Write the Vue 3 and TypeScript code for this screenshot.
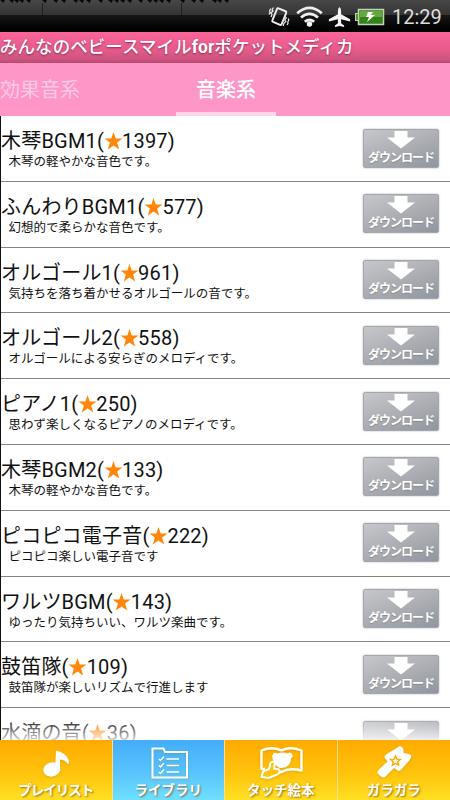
<script setup lang="ts">
interface Track {
  title: string
  stars: number
  note: string
}

const tracks: Track[] = [
  { title: '木琴BGM1', stars: 1397, note: '木琴の軽やかな音色です。' },
  { title: 'ふんわりBGM1', stars: 577, note: '幻想的で柔らかな音色です。' },
  { title: 'オルゴール1', stars: 961, note: '気持ちを落ち着かせるオルゴールの音です。' },
  { title: 'オルゴール2', stars: 558, note: 'オルゴールによる安らぎのメロディです。' },
  { title: 'ピアノ1', stars: 250, note: '思わず楽しくなるピアノのメロディです。' },
  { title: '木琴BGM2', stars: 133, note: '木琴の軽やかな音色です。' },
  { title: 'ピコピコ電子音', stars: 222, note: 'ピコピコ楽しい電子音です' },
  { title: 'ワルツBGM', stars: 143, note: 'ゆったり気持ちいい、ワルツ楽曲です。' },
  { title: '鼓笛隊', stars: 109, note: '鼓笛隊が楽しいリズムで行進します' },
  { title: '水滴の音', stars: 36, note: '' },
]

const notches: number[] = [0, 9, 14, 19, 26, 42, 53, 61, 73, 79, 86, 98, 108, 114, 120, 127, 138, 147, 153, 159, 166, 180, 191, 199, 212, 217, 224]
</script>

<template>
  <div class="screen">
    <header class="status">
      <svg class="notches" width="240" height="32" viewBox="0 0 240 32">
        <path v-for="x in notches" :key="x" :d="`M${x} 0h5l-1.5 3z`" fill="#080808" />
        <path d="M42.500 3v20M181.500 3v20" stroke="#111" stroke-opacity=".6" />
      </svg>
      <svg class="status-icons" width="118" height="26" viewBox="268 3 118 26">
        <g fill="none" stroke="#eee">
          <rect x="274.300" y="9.300" width="10" height="14.600" rx="1.200" stroke-width="1.900" transform="rotate(22 279.300 16.600)" />
          <path d="M273.500 7.500l-1.500 2.500 1 1-2 2 1 1.500-1 2.500M270.800 8.500l-1.300 2.500.6 1-1 2.500M285.300 16.500l1 1.500-1.500 2 1 1.500-2 2-.5 2.500M288.300 18.500l.5 1.500-1 2 .2 1.500-1 1.500" stroke-width="1.200" />
          <path d="M297.200 13.200Q309.500 2.500 321.800 13.200M301 17.600Q309.500 10.300 318 17.600M304.800 21.800Q309.500 17.800 314.200 21.800" stroke-width="2.700" />
        </g>
        <circle cx="309.500" cy="24" r="2.700" fill="#f3f3f3" />
        <path d="M339.500 7q-1.500 1-1.600 4v3.200l-9 5.100v2.200l9-2.200v4l-3 2.100v1.600l4.600-1 4.600 1v-1.600l-3-2.100v-4l9 2.200v-2.200l-9-5.100v-3.200q-.1-3-1.600-4z" fill="#f4f4f4" />
        <rect x="358.500" y="9.500" width="25" height="15" fill="#338316" stroke="#c8cfc0" stroke-width="1.500" />
        <rect x="360" y="11" width="22" height="6" fill="#62a940" />
        <rect x="355.500" y="13.500" width="3" height="7" fill="#489421" stroke="#c8cfc0" />
        <path d="M368 12h5l-2 3h4l-8 7 2-5h-3z" fill="#fff" />
      </svg>
      <span class="clock">12:29</span>
    </header>

    <h1 class="title">みんなのベビースマイル<b>for</b>ポケットメディカ</h1>

    <nav class="tabs">
      <span class="tab dim">効果音系</span>
      <span class="tab active">音楽系</span>
    </nav>

    <main class="list">
      <article v-for="track in tracks" :key="track.title" class="row">
        <div class="info">
          <h2 class="name">{{ track.title }}(<svg class="star" width="19" height="18" viewBox="0 0 19 18"><path d="M9.500 0l2.200 6.400h6.800l-5.400 4.200 2.100 6.900-5.700-4.100-5.700 4.100 2.100-6.900L.5 6.400h6.800z" fill="#ff860b" /></svg>{{ track.stars }})</h2>
          <p class="note">{{ track.note }}</p>
        </div>
        <button class="download">
          <svg class="arrow" width="30" height="18" viewBox="0 0 30 18"><path d="M8.500 0h13v6.500h7.500L15 17.500 1 6.500h7.500z" fill="#fff" /></svg>
          <span class="download-label">ダウンロード</span>
        </button>
      </article>
      <div class="fade"></div>
    </main>

    <footer class="bottom">
      <div class="item">
        <svg class="icon" width="52" height="36" viewBox="0 0 52 36">
          <ellipse cx="21.800" cy="27.500" rx="8.600" ry="7" transform="rotate(-15 21.800 27.500)" fill="#fff" />
          <path d="M25 28l1-19.500q7.500 1.500 11 6.500 3.500 5 1 7.500-2.500-4.500-8-5l.2 11z" fill="#fff" />
        </svg>
        <span class="label narrow">プレイリスト</span>
      </div>
      <div class="item on">
        <svg class="icon" width="52" height="36" viewBox="0 0 52 36" fill="none" stroke="#fff">
          <path d="M10.500 6.500h11l1.500 3.500h22v25.500H10.500z" stroke-width="2" />
          <path d="M24.500 17H37M24.500 23.500H37M24.500 30H37" stroke-width="1.500" />
          <path d="M17 17l1.500 1.500 3.500-4M17 23.500l1.500 1.500 3.500-4M17 30l1.500 1.500 3.500-4" stroke-width="1.500" />
        </svg>
        <span class="label">ライブラリ</span>
      </div>
      <div class="item">
        <svg class="icon" width="52" height="38" viewBox="0 0 52 38">
          <path d="M10 28H6.500V9.500q10.500-4.500 20 0 8.500-4.500 20 0v20q-11-3-19 1-3 1-4 0" fill="none" stroke="#fff" stroke-width="2.400" stroke-linejoin="round" />
          <path d="M17.500 14q1-3.500 5-1.500 5-2 10 0 3.500-2 5 1.500 1 2-1.500 3.500 0 9-9.500 9.500-5 0-7-6-3-3-2-7z" fill="#fff" />
          <path d="M6.500 36l1.500-5.500 6-2.500 1.500-6q3-3 4.500.5l-1 5 5 1q2 4-3 5.500l-7.500 3z" fill="#fdc40a" stroke="#fff" stroke-width="2" stroke-linejoin="round" />
        </svg>
        <span class="label">タッチ絵本</span>
      </div>
      <div class="item">
        <svg class="icon" width="52" height="36" viewBox="0 0 52 36">
          <path d="M29.500 5.500q2-2 4.500-.5 2 1 1.500 6l5.500 1q3.500 1 1.500 4.500-1 2-3 4l-6 7q-2 2.500-4.500.5l-3-2-8.500 8.500q-2 2-4.500 0l-3-2.500q-1.500-2 .5-4l9-8.500-2.500-3q-1.500-2 1-4z" fill="#fff" />
          <path d="M27.500 14l1.400 3.100 3.500.3-2.600 2.400.8 3.400-3.100-1.700-3.100 1.700.8-3.400-2.600-2.400 3.500-.3z" fill="#fff5d8" stroke="#f7a800" stroke-width="1.400" />
        </svg>
        <span class="label">ガラガラ</span>
      </div>
    </footer>
  </div>
</template>

<style>
body {
  margin: 0;
  overflow: hidden;
}
</style>

<style scoped>
.screen {
  width: 450px;
  height: 800px;
  display: flex;
  flex-direction: column;
  overflow: hidden;
  background: #fff;
  font-family: Roboto, "Noto Sans CJK JP", sans-serif;
  color: #111;
}
.status {
  height: 32px;
  flex: none;
  display: flex;
  align-items: flex-start;
  background: linear-gradient(#474747 0, #343434 15px, #171717 15px, #030303 27px, #000 32px);
}
.notches {
  margin-right: 28px;
}
.status-icons {
  margin-top: 3px;
}
.clock {
  margin-left: 6px;
  line-height: 34px;
  font-size: 20px;
  color: #ddd;
  white-space: nowrap;
}
.title {
  height: 31px;
  flex: none;
  margin: 0;
  background: linear-gradient(#fb659a, #e45a8b 60%, #cd5480 88%, #bb4871);
  color: #fff;
  font-size: 17.5px;
  line-height: 30px;
  letter-spacing: .05px;
  font-weight: 500;
  text-shadow: 0 1px 2px rgba(90, 10, 40, .6);
  white-space: nowrap;
}
.title b {
  font-weight: 700;
  font-size: 17.5px;
}
.tabs {
  height: 53px;
  flex: none;
  display: flex;
  background: #ff96c8;
  font-size: 20px;
  line-height: 55px;
}
.tab {
  box-sizing: border-box;
  height: 53px;
}
.dim {
  width: 176px;
  color: #ffcbe4;
}
.active {
  width: 100px;
  text-align: center;
  color: #fff;
  font-weight: 500;
  border-bottom: 4px solid #ffd6ea;
}
.list {
  position: relative;
  box-sizing: border-box;
  height: 624px;
  flex: none;
  overflow: hidden;
  border-left: 1px solid #111;
  background: #fff;
}
.row {
  box-sizing: border-box;
  height: 65.8px;
  display: flex;
  justify-content: space-between;
  padding: 12px 11px 0 0;
  border-bottom: 1px solid #858585;
}
.name {
  height: 26px;
  margin: 0;
  font-size: 20px;
  line-height: 26px;
  letter-spacing: .2px;
  font-weight: 400;
  white-space: nowrap;
}
.star {
  vertical-align: -2px;
  margin: 0 -.5px;
}
.note {
  margin: 0 0 0 7.500px;
  font-size: 12.500px;
  line-height: 16px;
  white-space: nowrap;
}
.download {
  box-sizing: border-box;
  width: 76px;
  height: 39px;
  flex: none;
  display: flex;
  flex-direction: column;
  align-items: center;
  margin-top: .5px;
  padding: 1px 0 0;
  border: 1px solid #a2a6ad;
  border-radius: 2px;
  background: linear-gradient(160deg, #c6c7cb, #aaacb1 55%, #9095a0);
  box-shadow: 0 0 2px #aaa;
  color: #fff;
  font: 700 12px/16px "Noto Sans CJK JP", sans-serif;
}
.arrow {
  flex: none;
}
.download-label {
  letter-spacing: -1px;
  white-space: nowrap;
  text-shadow: 0 1px 1px #888;
}
.fade {
  position: absolute;
  inset: auto 0 0;
  height: 22px;
  background: linear-gradient(rgba(255, 255, 255, 0), rgba(255, 255, 255, .8));
}
.bottom {
  height: 60px;
  flex: none;
  display: grid;
  grid-template-columns: repeat(4, 1fr);
}
.item {
  display: flex;
  flex-direction: column;
  align-items: center;
  border-right: 1px solid #ffdc91;
  background: linear-gradient(#ffaa00, #ffc30c 55%, #ffe024);
  color: #fff;
}
.item:last-child {
  border-right: 0;
}
.on {
  background: linear-gradient(#43adf9, #58c4fd 55%, #6fe0ff);
}
.icon {
  height: 40px;
  flex: none;
  filter: drop-shadow(0 1px 1px rgba(130, 90, 0, .25));
}
.label {
  font: 700 13.500px/18px "Noto Sans CJK JP", sans-serif;
  text-shadow: 1px 1px 2px rgba(130, 75, 0, .75);
  white-space: nowrap;
}
.narrow {
  letter-spacing: -1px;
}
</style>
